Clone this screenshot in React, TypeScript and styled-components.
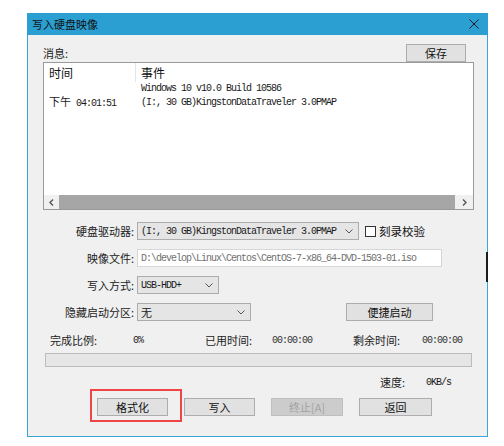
import React from 'react';
import styled, { createGlobalStyle } from 'styled-components';

const Global = createGlobalStyle`
  html, body { margin: 0; padding: 0; background: #ffffff; }
  body {
    font-family: "Noto Sans CJK SC", "Noto Sans", sans-serif;
    font-size: 11px;
    color: #000;
  }
  #root { width: 504px; height: 446px; }
`;

const MONO = `"Liberation Mono", "Noto Sans CJK SC", monospace`;

const Page = styled.div`
  width: 504px;
  height: 446px;
  box-sizing: border-box;
  padding: 13px 0 0 27px;
`;

const Window = styled.div`
  position: relative;
  width: 461px;
  height: 424px;
  box-sizing: border-box;
  border: 1px solid #3aa5d8;
  border-top: none;
  background: #f0f0f0;
  display: flex;
  flex-direction: column;
`;

const EdgeShadow = styled.div`
  position: absolute;
  right: -1px;
  top: 239px;
  width: 2px;
  height: 30px;
  background: #1c1c1c;
`;

const TitleBar = styled.div`
  height: 22px;
  flex-shrink: 0;
  background: #2b9fd1;
  display: flex;
  align-items: center;
  justify-content: space-between;
  padding: 0 9px 0 5px;
  margin: 0 -1px;
`;

const Title = styled.span`
  font-size: 11px;
  color: #111;
  line-height: 22px;
`;

const Content = styled.div`
  flex: 1;
  display: flex;
  flex-direction: column;
  padding: 9px 13px 0 15px;
`;

const TopRow = styled.div`
  height: 17px;
  display: flex;
  align-items: center;
  justify-content: space-between;
  padding-right: 8px;
`;

const Label = styled.span`
  font-size: 11px;
  color: #222;
  white-space: nowrap;
`;

const Button = styled.div<{ $w?: number; $disabled?: boolean }>`
  width: ${(p) => p.$w ?? 60}px;
  height: 18px;
  box-sizing: border-box;
  border: 1px solid ${(p) => (p.$disabled ? '#bfbfbf' : '#adadad')};
  background: ${(p) => (p.$disabled ? '#cccccc' : '#e1e1e1')};
  color: ${(p) => (p.$disabled ? '#a3a3a3' : '#111')};
  font-size: 11px;
  display: flex;
  align-items: center;
  justify-content: center;
  white-space: nowrap;
  position: relative;
`;

const MessageBox = styled.div`
  margin-top: 1px;
  height: 148px;
  box-sizing: border-box;
  border: 1px solid #9a9a9a;
  background: #fff;
  display: flex;
  flex-direction: column;
`;

const HeaderRow = styled.div`
  height: 19px;
  display: grid;
  grid-template-columns: 92px 1fr;
`;

const HeaderCell = styled.div<{ $sep?: boolean }>`
  font-size: 12px;
  line-height: 19px;
  padding-left: 5px;
  color: #111;
  border-right: ${(p) => (p.$sep ? '1px solid #e5e5e5' : 'none')};
`;

const MsgRow = styled.div`
  height: 13px;
  display: grid;
  grid-template-columns: 92px 1fr;
  align-items: center;
`;

const MsgCell = styled.div`
  padding-left: 5px;
  font-family: ${MONO};
  font-size: 10px;
  letter-spacing: -1px;
  white-space: nowrap;
  color: #1a1a1a;
  line-height: 13px;
`;

const Cjk = styled.span`
  font-family: "Noto Sans CJK SC", sans-serif;
  font-size: 11px;
  letter-spacing: 0;
  margin-right: 5px;
`;

const Spacer = styled.div`
  flex: 1;
`;

const ScrollBar = styled.div`
  height: 14px;
  display: flex;
  align-items: stretch;
  background: #f0f0f0;
`;

const ScrollArrow = styled.div<{ $w: number }>`
  width: ${(p) => p.$w}px;
  display: flex;
  align-items: center;
  justify-content: center;
`;

const Thumb = styled.div`
  flex: 1;
  background: #a6a6a6;
`;

const Form = styled.div`
  margin-top: 12px;
  display: grid;
  grid-template-columns: 91px 1fr;
  column-gap: 3px;
  row-gap: 9px;
  grid-auto-rows: 18px;
  align-items: center;
`;

const FormLabel = styled.div`
  text-align: right;
  font-size: 11px;
  color: #222;
  white-space: nowrap;
`;

const Controls = styled.div`
  display: flex;
  align-items: center;
  height: 18px;
`;

const Select = styled.div<{ $w: number }>`
  width: ${(p) => p.$w}px;
  height: 18px;
  box-sizing: border-box;
  border: 1px solid #acacac;
  background: #e5e5e5;
  display: flex;
  align-items: center;
  justify-content: space-between;
  padding: 0 5px 0 3px;
`;

const MonoText = styled.span<{ $color?: string }>`
  font-family: ${MONO};
  font-size: 10px;
  letter-spacing: -1px;
  white-space: nowrap;
  color: ${(p) => p.$color ?? '#1a1a1a'};
`;

const Input = styled.div`
  width: 305px;
  height: 18px;
  box-sizing: border-box;
  border: 1px solid #d6d6d6;
  background: #fff;
  display: flex;
  align-items: center;
  padding-left: 3px;
`;

const Check = styled.div`
  width: 11px;
  height: 11px;
  box-sizing: border-box;
  border: 1px solid #333;
  background: #fff;
  margin-left: 6px;
  margin-right: 3px;
`;

const CheckLabel = styled.span`
  font-size: 11.5px;
  color: #111;
`;

const Stats = styled.div`
  margin-top: 11px;
  height: 14px;
  padding-left: 7px;
  display: grid;
  grid-template-columns: 83px 72px 67px 81px 69px auto;
  align-items: center;
`;

const StatLabel = styled.span`
  font-size: 11px;
  color: #222;
  white-space: nowrap;
`;

const Progress = styled.div`
  margin: 7px 2px 0 2px;
  height: 14px;
  box-sizing: border-box;
  border: 1px solid #bcbcbc;
  background: #e6e6e6;
`;

const SpeedRow = styled.div`
  margin-top: 7px;
  height: 14px;
  padding-left: 337px;
  display: grid;
  grid-template-columns: 46px auto;
  align-items: center;
`;

const ButtonRow = styled.div`
  margin-top: 10px;
  padding-left: 54px;
  display: flex;
  gap: 16px;
`;

const Highlight = styled.div`
  position: absolute;
  left: -8px;
  top: -10px;
  width: 92px;
  height: 33px;
  box-sizing: border-box;
  border: 2px solid #ee4545;
  pointer-events: none;
`;

const Chevron = () => (
  <svg width="8" height="5" viewBox="0 0 8 5">
    <path d="M0.5 0.5 L4 4 L7.5 0.5" fill="none" stroke="#555" strokeWidth="1" />
  </svg>
);

const CloseIcon = () => (
  <svg width="10" height="10" viewBox="0 0 10 10">
    <path d="M0.5 0.5 L9.5 9.5 M9.5 0.5 L0.5 9.5" stroke="#1a1a1a" strokeWidth="1" fill="none" />
  </svg>
);

const ArrowL = () => (
  <svg width="5" height="7" viewBox="0 0 5 7">
    <path d="M4 0.5 L1 3.5 L4 6.5" fill="none" stroke="#555" strokeWidth="1.4" />
  </svg>
);

const ArrowR = () => (
  <svg width="5" height="7" viewBox="0 0 5 7">
    <path d="M1 0.5 L4 3.5 L1 6.5" fill="none" stroke="#555" strokeWidth="1.4" />
  </svg>
);

export default function App() {
  return (
    <>
      <Global />
      <Page>
        <Window>
          <TitleBar>
            <Title>写入硬盘映像</Title>
            <CloseIcon />
          </TitleBar>
          <Content>
            <TopRow>
              <Label>消息:</Label>
              <Button $w={60}>保存</Button>
            </TopRow>
            <MessageBox>
              <HeaderRow>
                <HeaderCell $sep>时间</HeaderCell>
                <HeaderCell>事件</HeaderCell>
              </HeaderRow>
              <MsgRow>
                <MsgCell />
                <MsgCell>Windows 10 v10.0 Build 10586</MsgCell>
              </MsgRow>
              <MsgRow>
                <MsgCell>
                  <Cjk>下午</Cjk>04:01:51
                </MsgCell>
                <MsgCell>(I:, 30 GB)KingstonDataTraveler 3.0PMAP</MsgCell>
              </MsgRow>
              <Spacer />
              <ScrollBar>
                <ScrollArrow $w={15}>
                  <ArrowL />
                </ScrollArrow>
                <Thumb />
                <ScrollArrow $w={18}>
                  <ArrowR />
                </ScrollArrow>
              </ScrollBar>
            </MessageBox>

            <Form>
              <FormLabel>硬盘驱动器:</FormLabel>
              <Controls>
                <Select $w={222}>
                  <MonoText>(I:, 30 GB)KingstonDataTraveler 3.0PMAP</MonoText>
                  <Chevron />
                </Select>
                <Check />
                <CheckLabel>刻录校验</CheckLabel>
              </Controls>

              <FormLabel>映像文件:</FormLabel>
              <Controls>
                <Input>
                  <MonoText $color="#707070">
                    D:\develop\Linux\Centos\CentOS-7-x86_64-DVD-1503-01.iso
                  </MonoText>
                </Input>
              </Controls>

              <FormLabel>写入方式:</FormLabel>
              <Controls>
                <Select $w={82}>
                  <MonoText>USB-HDD+</MonoText>
                  <Chevron />
                </Select>
              </Controls>

              <FormLabel>隐藏启动分区:</FormLabel>
              <Controls>
                <Select $w={114}>
                  <Label>无</Label>
                  <Chevron />
                </Select>
                <Button $w={87} style={{ marginLeft: 95 }}>
                  便捷启动
                </Button>
              </Controls>
            </Form>

            <Stats>
              <StatLabel>完成比例:</StatLabel>
              <MonoText>0%</MonoText>
              <StatLabel>已用时间:</StatLabel>
              <MonoText $color="#333">00:00:00</MonoText>
              <StatLabel>剩余时间:</StatLabel>
              <MonoText $color="#333">00:00:00</MonoText>
            </Stats>

            <Progress />

            <SpeedRow>
              <StatLabel>速度:</StatLabel>
              <MonoText>0KB/s</MonoText>
            </SpeedRow>

            <ButtonRow>
              <Button $w={71}>
                格式化
                <Highlight />
              </Button>
              <Button $w={71}>写入</Button>
              <Button $w={72} $disabled>
                终止[A]
              </Button>
              <Button $w={73}>返回</Button>
            </ButtonRow>
          </Content>
          <EdgeShadow />
        </Window>
      </Page>
    </>
  );
}
